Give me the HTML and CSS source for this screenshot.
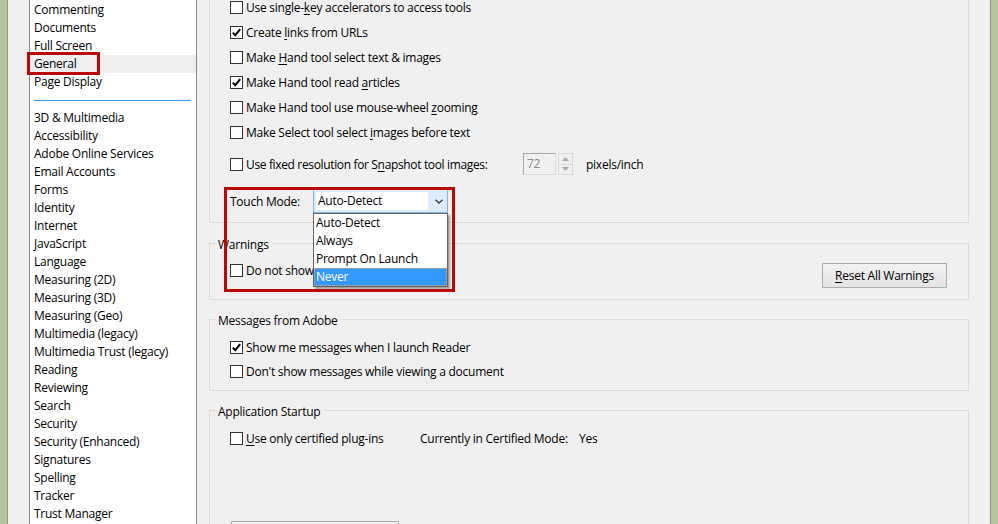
FILE: index.html
```html
<!DOCTYPE html>
<html>
<head>
<meta charset="utf-8">
<link rel="stylesheet" href="styles.css">
</head>
<body>
<div class="frame frame-l"></div>
<div class="sidebar">
  <ul class="cats">
    <li>Commenting</li>
    <li>Documents</li>
    <li>Full Screen</li>
    <li class="sel"><span class="mark mark-general"></span>General</li>
    <li>Page Display</li>
    <li class="sep"><span class="sep-line"></span></li>
    <li>3D &amp; Multimedia</li>
    <li>Accessibility</li>
    <li>Adobe Online Services</li>
    <li>Email Accounts</li>
    <li>Forms</li>
    <li>Identity</li>
    <li>Internet</li>
    <li>JavaScript</li>
    <li>Language</li>
    <li>Measuring (2D)</li>
    <li>Measuring (3D)</li>
    <li>Measuring (Geo)</li>
    <li>Multimedia (legacy)</li>
    <li>Multimedia Trust (legacy)</li>
    <li>Reading</li>
    <li>Reviewing</li>
    <li>Search</li>
    <li>Security</li>
    <li>Security (Enhanced)</li>
    <li>Signatures</li>
    <li>Spelling</li>
    <li>Tracker</li>
    <li>Trust Manager</li>
  </ul>
</div>
<main class="content">
  <fieldset class="group group-top">
    <div class="body">
      <div class="cb-row"><span class="cb"></span><span>Use single-<u>k</u>ey accelerators to access tools</span></div>
      <div class="cb-row"><span class="cb"><svg viewBox="0 0 11 11"><polyline points="1.8,5.6 4.3,8.2 9.2,2.2"/></svg></span><span>Create <u>l</u>inks from URLs</span></div>
      <div class="cb-row"><span class="cb"></span><span>Make <u>H</u>and tool select text &amp; images</span></div>
      <div class="cb-row"><span class="cb"><svg viewBox="0 0 11 11"><polyline points="1.8,5.6 4.3,8.2 9.2,2.2"/></svg></span><span>Make Hand tool read <u>a</u>rticles</span></div>
      <div class="cb-row"><span class="cb"></span><span>Make Hand tool use mouse-wheel <u>z</u>ooming</span></div>
      <div class="cb-row"><span class="cb"></span><span>Make Select tool select <u>i</u>mages before text</span></div>
      <div class="snap-row">
        <div class="cb-row snap-label"><span class="cb"></span><span>Use fixed resolution for S<u>n</u>apshot tool images:</span></div>
        <div class="spin-input">72</div>
        <div class="spin-btns">
          <span class="spin-btn"><svg viewBox="0 0 7 4"><polygon points="0,4 3.5,0 7,4"/></svg></span>
          <span class="spin-btn"><svg viewBox="0 0 7 4"><polygon points="0,0 3.5,4 7,0"/></svg></span>
        </div>
        <span class="unit">pixels/inch</span>
      </div>
      <div class="touch-row">
        <span class="touch-label">Touch Mode:</span>
        <div class="combo">
          <div class="combo-field">Auto-Detect</div>
          <div class="combo-arrow"><svg viewBox="0 0 8 5"><polyline points="0.5,0.8 4,4 7.5,0.8"/></svg></div>
          <ul class="dropdown">
            <li>Auto-Detect</li>
            <li>Always</li>
            <li>Prompt On Launch</li>
            <li class="hot">Never</li>
          </ul>
        </div>
        <span class="mark mark-touch"></span>
      </div>
    </div>
  </fieldset>

  <fieldset class="group group-warn">
    <legend>Warnings</legend>
    <div class="body warn-row">
      <div class="cb-row short"><span class="cb"></span><span>Do not show</span></div>
      <button class="btn reset"><u>R</u>eset All Warnings</button>
    </div>
  </fieldset>

  <fieldset class="group group-msg">
    <legend>Messages from Adobe</legend>
    <div class="body">
      <div class="cb-row r24"><span class="cb"><svg viewBox="0 0 11 11"><polyline points="1.8,5.6 4.3,8.2 9.2,2.2"/></svg></span><span>Show me messages when I launch Reader</span></div>
      <div class="cb-row r24"><span class="cb"></span><span>Don't show messages while viewing a document</span></div>
    </div>
  </fieldset>

  <fieldset class="group group-start">
    <legend>Application Startup</legend>
    <div class="body">
      <div class="start-row">
        <div class="cb-row r24 plug"><span class="cb"></span><span><u>U</u>se only certified plug-ins</span></div>
        <span class="cert">Currently in Certified Mode:</span>
        <span>Yes</span>
      </div>
      <button class="btn startup-btn"></button>
    </div>
  </fieldset>
</main>
<div class="frame frame-r"></div>
</body>
</html>
```

FILE: styles.css
```css
* { box-sizing: border-box; }

html, body {
  margin: 0;
  padding: 0;
}

body {
  width: 998px;
  height: 524px;
  overflow: hidden;
  display: flex;
  background: #f0f0f0;
  font-family: "Open Sans", "Noto Sans", sans-serif;
  font-size: 12px;
  letter-spacing: -0.25px;
  color: #000;
}

u { text-decoration: underline; text-underline-offset: 2px; }

.frame {
  width: 8px;
  flex: none;
  background: #b4c49c;
}
.frame-l { border-right: 1px solid #8e9b7b; }
.frame-r { border-left: 1px solid #8e9b7b; }

/* ---------- sidebar list ---------- */
.sidebar {
  flex: none;
  width: 189px;
  padding-left: 21px;
}

.cats {
  list-style: none;
  margin: 0;
  padding: 1px 0 0;
  width: 168px;
  height: 100%;
  background: #fff;
  border: 1px solid #828790;
  border-top: none;
  border-bottom: none;
}

.cats li {
  position: relative;
  height: 18px;
  line-height: 18px;
  padding-left: 4px;
  white-space: nowrap;
}

.cats li.sel { background: #efefef; }

.cats li.sep {
  display: flex;
  align-items: center;
  padding: 0 5px 0 4px;
}
.sep-line {
  display: block;
  width: 100%;
  height: 1px;
  background: #3f9be6;
}

.mark {
  position: absolute;
  border: 3px solid #b80808;
  pointer-events: none;
  z-index: 5;
}
.mark-general {
  left: -3px;
  top: -3px;
  width: 73px;
  height: 23px;
}

/* ---------- content ---------- */
.content {
  flex: 1;
  min-width: 0;
  overflow: hidden;
}

.group {
  margin: 0 21px 0 12px;
  padding: 0 20px 0 6px;
  border: 1px solid #dcdcdc;
  min-width: 0;
}

.group legend {
  padding: 0 2px;
  line-height: 20px;
  height: 16px;
}

.body { padding-left: 14px; }

.group-top {
  margin-top: -5px;
  border-top: none;
  padding-bottom: 9px;
}

.cb-row {
  display: flex;
  align-items: center;
  height: 25px;
  white-space: nowrap;
}
.cb-row.r24 { height: 24px; }
.cb-row.short { height: 14px; }

.cb {
  flex: none;
  width: 13px;
  height: 13px;
  border: 1px solid #333;
  background: #fff;
  margin-right: 3px;
  display: flex;
  align-items: center;
  justify-content: center;
}
.cb svg {
  width: 11px;
  height: 11px;
}
.cb polyline {
  fill: none;
  stroke: #000;
  stroke-width: 2;
}

/* snapshot row */
.snap-row {
  display: flex;
  align-items: center;
  height: 22px;
  margin-top: 8px;
}
.snap-label {
  width: 293px;
  height: 22px;
  letter-spacing: -0.35px;
}
.spin-input {
  width: 33px;
  height: 22px;
  border: 1px solid #dcdcdc;
  border-top-color: #a8a8a8;
  border-left-color: #a8a8a8;
  color: #8a8a8a;
  padding-left: 3px;
  line-height: 20px;
}
.spin-btns {
  display: flex;
  flex-direction: column;
  margin-left: 2px;
  width: 15px;
  height: 22px;
}
.spin-btn {
  flex: 1;
  border: 1px solid #dadada;
  display: flex;
  align-items: center;
  justify-content: center;
}
.spin-btn + .spin-btn { border-top: none; }
.spin-btn svg { width: 7px; height: 4px; }
.spin-btn polygon { fill: #a6a6a6; }
.unit { margin-left: 13px; }

/* touch mode */
.touch-row {
  position: relative;
  display: flex;
  align-items: center;
  height: 24px;
  margin-top: 14px;
}
.touch-label { width: 83px; }

.combo {
  position: relative;
  width: 135px;
  height: 24px;
  border: 1px solid #7eb4ea;
  background: #dcecfc;
  display: flex;
}
.combo-field {
  margin: 2px 0 2px 2px;
  width: 112px;
  height: 18px;
  line-height: 18px;
  background: #fff;
  padding-left: 2px;
}
.combo-arrow {
  flex: 1;
  display: flex;
  align-items: center;
  justify-content: center;
  padding-left: 2px;
}
.combo-arrow svg { width: 8px; height: 5px; }
.combo-arrow polyline { fill: none; stroke: #3c3c3c; stroke-width: 1.4; }

.dropdown {
  position: absolute;
  left: -1px;
  top: calc(100% + 1px);
  width: 135px;
  margin: 0;
  padding: 0;
  list-style: none;
  background: #fff;
  border: 1px solid #646464;
  box-shadow: 2px 2px 2px rgba(0, 0, 0, 0.35);
  z-index: 3;
}
.dropdown li {
  height: 18px;
  line-height: 18px;
  padding-left: 2px;
  white-space: nowrap;
}
.dropdown li.hot {
  background: #3399ff;
  color: #fff;
  outline: 1px dotted #f2a25a;
  outline-offset: -1px;
}

.mark-touch {
  left: -6px;
  top: -2px;
  width: 231px;
  height: 105px;
}

/* warnings */
.group-warn {
  margin-top: 12px;
  padding-bottom: 11px;
}
.warn-row {
  display: flex;
  justify-content: space-between;
  align-items: flex-start;
  padding-top: 12px;
}

.btn {
  font: inherit;
  letter-spacing: inherit;
  color: #000;
  border: 1px solid #adadad;
  background: linear-gradient(#f2f2f2, #e4e4e4);
  padding: 0;
}
.reset {
  width: 125px;
  height: 25px;
  margin-right: 1px;
}

/* messages */
.group-msg {
  margin-top: 11px;
  padding-bottom: 7px;
}
.group-msg .body { padding-top: 8px; }

/* startup */
.group-start {
  margin-top: 11px;
  padding-bottom: 20px;
}
.group-start .body { padding-top: 8px; }
.start-row {
  display: flex;
  align-items: center;
  height: 24px;
  white-space: nowrap;
}
.plug { width: 190px; }
.cert { width: 159px; }
.startup-btn {
  display: block;
  margin: 71px 0 0 1px;
  width: 168px;
  height: 23px;
}
```
